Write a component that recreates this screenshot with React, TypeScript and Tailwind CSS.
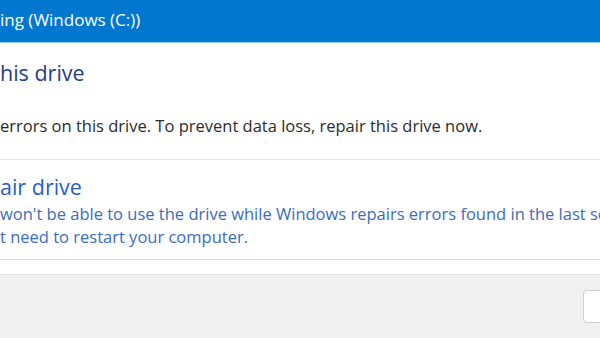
export default function App() {
  return (
    <div className="w-[600px] h-[338px] overflow-hidden bg-white flex flex-col font-['Open_Sans',sans-serif]">
      <div className="h-[42px] shrink-0 bg-[#0277cf] flex items-center text-white text-[17px] whitespace-nowrap">
        <span className="pb-[2px]">ing (Windows (C:))</span>
      </div>
      <div className="h-[1px] shrink-0 bg-[#8fd0f7]" />
      <div className="flex-1 flex flex-col">
        <div className="pt-[16px] text-[21.5px] leading-[28px] text-[#1f3d8c] whitespace-nowrap">
          <span>his drive</span>
        </div>
        <div className="mt-[28px] text-[16.5px] leading-[22px] text-[#2b2b2b] whitespace-nowrap">
          errors on this drive. To prevent data loss, repair this drive now.
        </div>
        <div className="mt-[22px] border-t border-[#e6e6e6] border-b border-b-[#dce2ec] pt-[13px] pb-[11px] flex flex-col">
          <div className="text-[21.5px] leading-[28px] text-[#2561c4] whitespace-nowrap">air drive</div>
          <div className="mt-[1px] text-[16.5px] leading-[23px] text-[#3c6bc0] overflow-hidden">
            <div className="whitespace-nowrap">won't be able to use the drive while Windows repairs errors found in the last sc</div>
            <div className="whitespace-nowrap">t need to restart your computer.</div>
          </div>
        </div>
      </div>
      <div className="h-[64px] shrink-0 border-t border-[#e3e3e3] bg-[#f0f0f0] flex justify-end items-start pt-[15px]">
        <div className="w-[60px] h-[33px] -mr-[43px] bg-white border border-[#cfcfcf] rounded-[4px]" />
      </div>
    </div>
  );
}
